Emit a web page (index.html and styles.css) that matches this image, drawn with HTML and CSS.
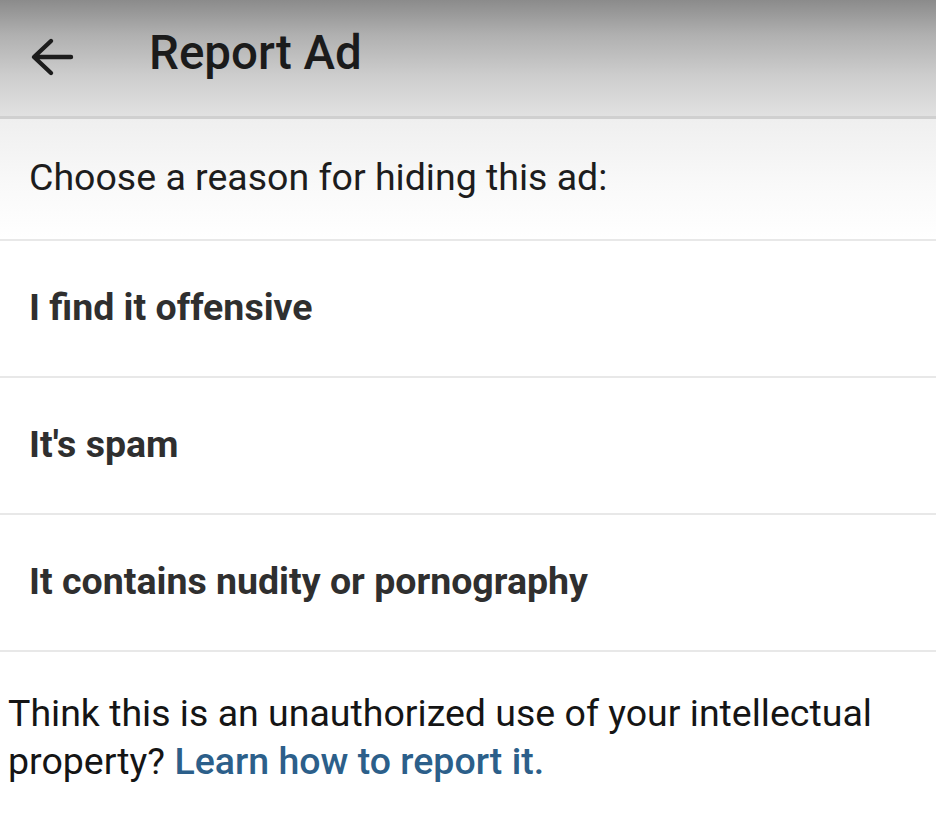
FILE: index.html
```html
<!DOCTYPE html>
<html>
<head>
<meta charset="utf-8">
<link rel="stylesheet" href="styles.css">
</head>
<body>
<div class="screen">
  <header class="topbar">
    <svg class="back" width="48" height="48" viewBox="0 0 48 48">
      <path d="M45 26H9M25 10L8 26L25 42" fill="none" stroke="#1c1c1c" stroke-width="4.4" stroke-linecap="round" stroke-linejoin="round"/>
    </svg>
    <h1 class="title">Report Ad</h1>
  </header>
  <div class="prompt">Choose a reason for hiding this ad:</div>
  <ul class="reasons">
    <li class="reason">I find it offensive</li>
    <li class="reason">It's spam</li>
    <li class="reason">It contains nudity or pornography</li>
  </ul>
  <p class="note">Think this is an unauthorized use of your intellectual property? <a class="link" href="#">Learn how to report it.</a></p>
</div>
</body>
</html>
```
FILE: styles.css
```css
html, body {
  margin: 0;
  padding: 0;
  background: #ffffff;
}
body {
  font-family: Roboto, "Liberation Sans", sans-serif;
  color: #1d1d1d;
}
.screen {
  width: 936px;
  height: 822px;
  overflow: hidden;
  display: flex;
  flex-direction: column;
}
.topbar {
  height: 119px;
  flex: none;
  display: flex;
  align-items: center;
  background: linear-gradient(to bottom, #8b8b8b 0%, #b0b0b0 30%, #cdcdcd 65%, #e1e1e1 100%);
  border-bottom: 3px solid #d0d0d0;
  padding-left: 26px;
  box-sizing: border-box;
}
.back {
  flex: none;
  margin-top: -6px;
}
.title {
  margin: -8px 0 0 75px;
  font-size: 47.5px;
  font-weight: 500;
  color: #1b1b1b;
  line-height: 1;
}
.prompt {
  height: 122px;
  flex: none;
  box-sizing: border-box;
  display: flex;
  align-items: center;
  padding-left: 29px;
  padding-bottom: 4px;
  font-size: 37.5px;
  color: #1d1d1d;
  background: linear-gradient(to bottom, #efefef 0%, #f9f9f9 55%, #ffffff 100%);
  border-bottom: 2px solid #e8e8e8;
}
.reasons {
  list-style: none;
  margin: 0;
  padding: 0;
}
.reason {
  height: 137px;
  box-sizing: border-box;
  display: flex;
  align-items: center;
  padding-left: 29px;
  padding-bottom: 4px;
  font-size: 37.5px;
  font-weight: 700;
  color: #2f2f2f;
  border-bottom: 2px solid #e8e8e8;
}
.note {
  margin: 37px 0 0 8px;
  max-width: 910px;
  font-size: 37.5px;
  line-height: 48px;
  color: #151515;
}
.link {
  color: #2c5f8a;
  text-decoration: none;
  font-weight: 500;
}
```
